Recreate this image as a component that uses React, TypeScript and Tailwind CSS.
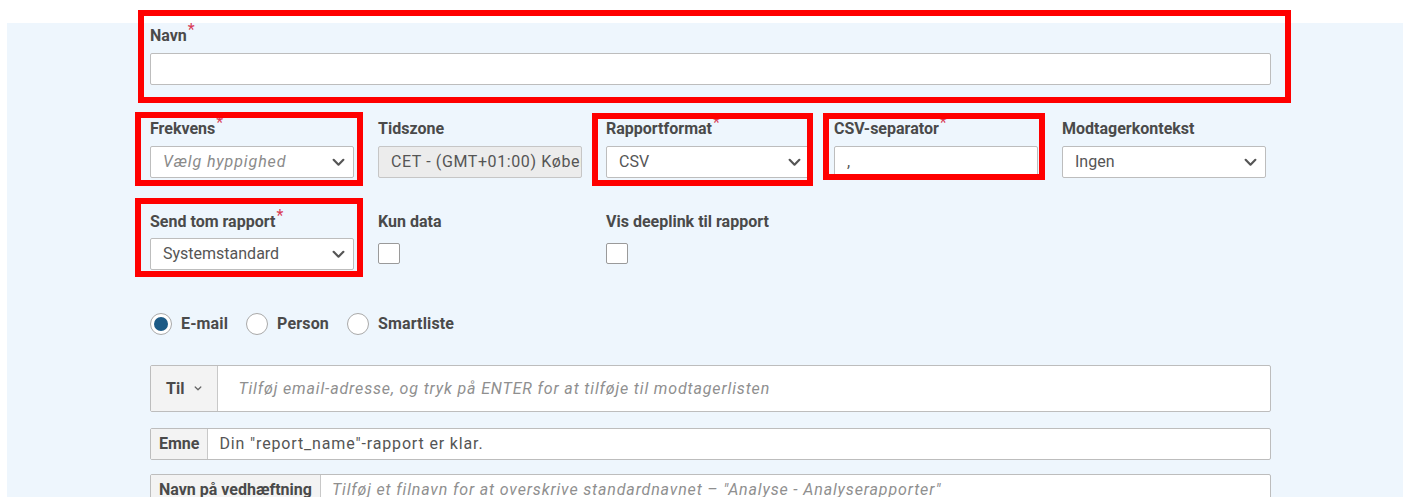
import type { ReactNode } from 'react'

const font = { fontFamily: 'Roboto, "Liberation Sans", sans-serif' }

function Chevron({ className = '' }: { className?: string }) {
    return (
        <svg viewBox="0 0 12 8" className={className} fill="none" stroke="currentColor" strokeWidth="2" strokeLinecap="round" strokeLinejoin="round">
            <path d="M1.5 1.5 6 6l4.5-4.5" />
        </svg>
    )
}

function Label({ text, required }: { text: string; required?: boolean }) {
    return (
        <div className="h-5 text-[16px] font-bold leading-5 text-[#4a4a4a] whitespace-nowrap">
            {text}
            {required && <span className="relative -top-[6px] ml-[1px] text-[16px] font-normal text-[#d93a55]">*</span>}
        </div>
    )
}

// red outline drawn on top of a field
function Marker({ className }: { className: string }) {
    return <div className={`pointer-events-none absolute border-[6px] border-[#ff0000] ${className}`} />
}

function Select({ value, placeholder }: { value?: string; placeholder?: string }) {
    return (
        <div className="flex h-8 w-[204px] items-center justify-between rounded-[2px] border border-[#bdbdbd] bg-white pl-3 pr-[8px]">
            {placeholder ? (
                <span className="text-[16px] italic tracking-[0.9px] text-[#8a8a8a]">{placeholder}</span>
            ) : (
                <span className="text-[16px] text-[#555]">{value}</span>
            )}
            <Chevron className="h-[9px] w-[13px] text-[#555]" />
        </div>
    )
}

function Checkbox() {
    return <div className="mt-[11px] h-[21px] w-[22px] rounded-[2px] border border-[#9a9a9a] bg-white" />
}

function Radio({ label, checked }: { label: string; checked?: boolean }) {
    return (
        <label className="flex items-center gap-[9px]">
            <span className="flex h-[22px] w-[22px] items-center justify-center rounded-full border border-[#a9a9a9] bg-white">
                {checked && <span className="h-[14px] w-[14px] rounded-full bg-[#1d5b86]" />}
            </span>
            <span className="text-[16px] font-bold leading-5 tracking-[0.15px] text-[#4a4a4a]">{label}</span>
        </label>
    )
}

function AddonRow({ addon, height, className = '', children }: { addon: ReactNode; height: string; className?: string; children: ReactNode }) {
    return (
        <div className={`flex w-[1121px] overflow-hidden rounded-[2px] border border-[#bdbdbd] bg-white ${height} ${className}`}>
            <div className="flex shrink-0 items-center border-r border-[#c8c8c8] bg-[#f3f3f3] px-[8px] text-[16px] font-bold text-[#4a4a4a]">
                {addon}
            </div>
            <div className="flex flex-1 items-center whitespace-nowrap px-[11px] text-[16px] tracking-[0.85px]">{children}</div>
        </div>
    )
}

export default function App() {
    return (
        <div className="h-[497px] overflow-hidden bg-white pt-[23px] pl-[7px]" style={font}>
            <div className="h-[500px] w-[1396px] bg-[#eef6fd] pl-[143px] pt-[3px]">
                {/* name */}
                <div className="relative w-[1121px]">
                    <Label text="Navn" required />
                    <div className="mt-[7px] h-8 rounded-[2px] border border-[#bdbdbd] bg-white" />
                    <Marker className="-left-[12px] -right-[20px] -top-[16px] -bottom-[18px]" />
                </div>

                {/* schedule row */}
                <div className="mt-[34px] flex gap-6">
                    <div className="relative">
                        <Label text="Frekvens" required />
                        <div className="mt-[7px]"><Select placeholder="Vælg hyppighed" /></div>
                        <Marker className="-left-[15px] -right-[9px] -top-[7px] -bottom-[8px]" />
                    </div>
                    <div>
                        <Label text="Tidszone" />
                        <div className="mt-[7px] flex h-8 w-[204px] items-center overflow-hidden whitespace-nowrap rounded-[2px] border border-[#c6c6c6] bg-[#ececec] px-3 text-[16px] tracking-[0.6px] text-[#555]">
                            CET - (GMT+01:00) København
                        </div>
                    </div>
                    <div className="relative">
                        <Label text="Rapportformat" required />
                        <div className="mt-[7px]"><Select value="CSV" /></div>
                        <Marker className="-left-[14px] -right-[3px] -top-[6px] -bottom-[8px]" />
                    </div>
                    <div className="relative">
                        <Label text="CSV-separator" required />
                        <div className="mt-[7px] flex h-8 w-[204px] items-end rounded-[2px] border border-[#bdbdbd] bg-white px-3 pb-[3px] text-[16px] text-[#555]">,</div>
                        <Marker className="-left-[11px] -right-[7px] -top-[6px] -bottom-[2px]" />
                    </div>
                    <div>
                        <Label text="Modtagerkontekst" />
                        <div className="mt-[7px]"><Select value="Ingen" /></div>
                    </div>
                </div>

                {/* delivery options */}
                <div className="mt-[34px] flex gap-6">
                    <div className="relative">
                        <Label text="Send tom rapport" required />
                        <div className="mt-[6px]"><Select value="Systemstandard" /></div>
                        <Marker className="-left-[15px] -right-[9px] -top-[14px] -bottom-[7px]" />
                    </div>
                    <div className="w-[204px]">
                        <Label text="Kun data" />
                        <Checkbox />
                    </div>
                    <div className="w-[204px]">
                        <Label text="Vis deeplink til rapport" />
                        <Checkbox />
                    </div>
                </div>

                {/* recipient type */}
                <div className="mt-[43px] flex items-center gap-[18px]">
                    <Radio label="E-mail" checked />
                    <Radio label="Person" />
                    <Radio label="Smartliste" />
                </div>

                <div className="mt-[30px] flex flex-col">
                    <AddonRow
                        height="h-[47px]"
                        addon={
                            <span className="flex items-center gap-[10px] px-[7px]">
                                Til <Chevron className="h-[5px] w-[8px] text-[#666]" />
                            </span>
                        }
                    >
                        <span className="pl-[9px] italic text-[#8f8f8f]">Tilføj email-adresse, og tryk på ENTER for at tilføje til modtagerlisten</span>
                    </AddonRow>
                    <AddonRow height="h-[32px]" className="mt-[16px]" addon="Emne">
                        <span className="text-[#555]">Din "report_name"-rapport er klar.</span>
                    </AddonRow>
                    <AddonRow height="h-[32px]" className="mt-[14px]" addon="Navn på vedhæftning">
                        <span className="italic text-[#8f8f8f]">Tilføj et filnavn for at overskrive standardnavnet – "Analyse - Analyserapporter"</span>
                    </AddonRow>
                </div>
            </div>
        </div>
    )
}
